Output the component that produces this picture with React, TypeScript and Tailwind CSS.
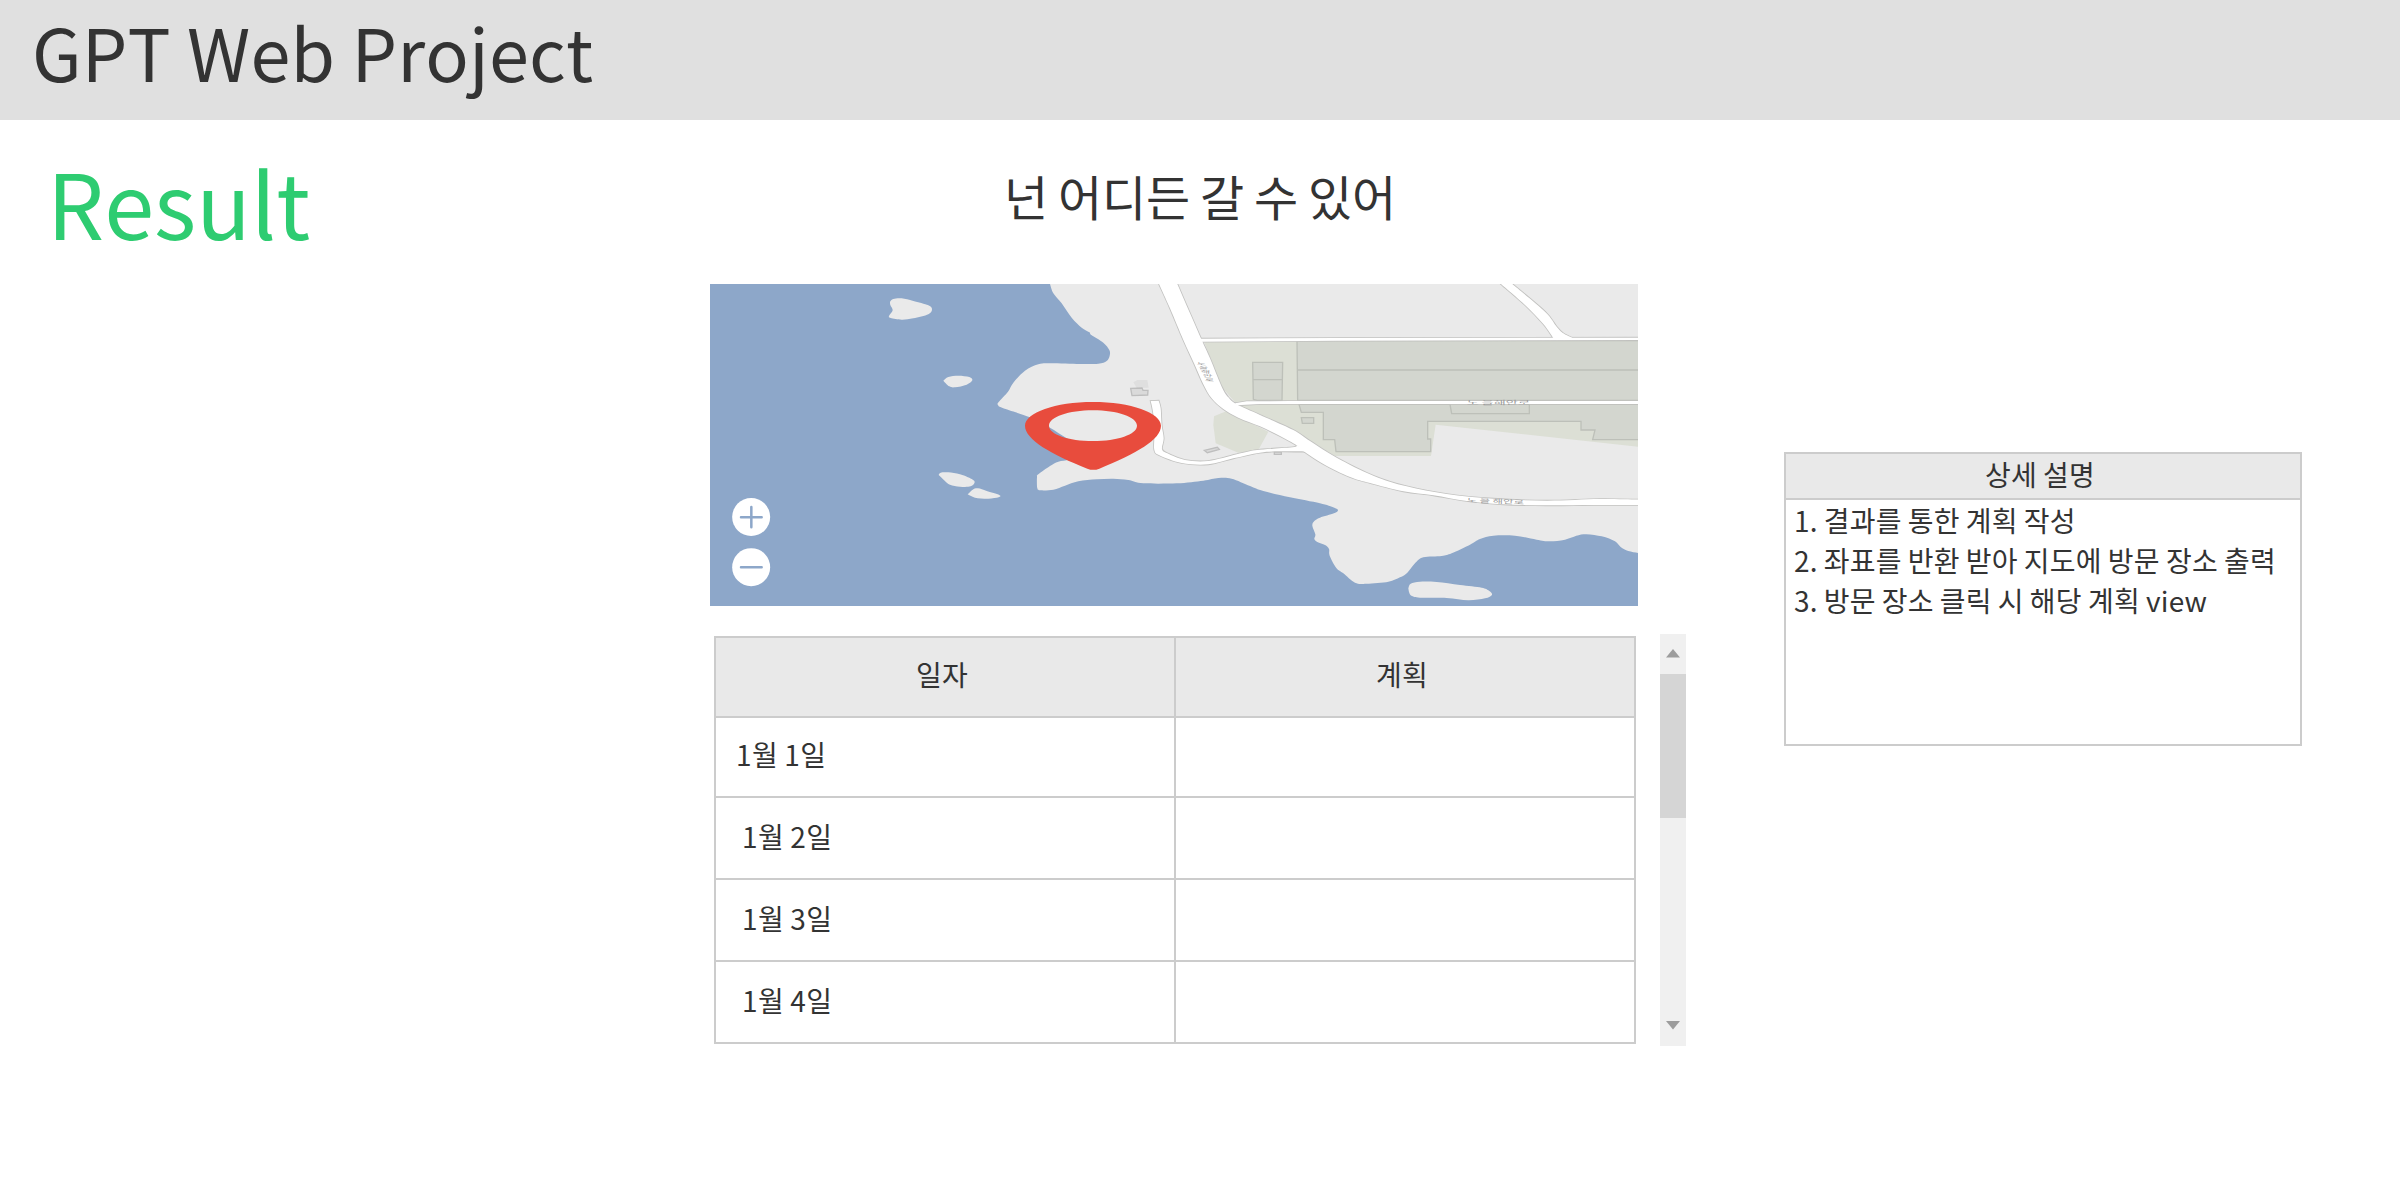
import React from "react";

type Point = [number, number];

/* Catmull-Rom segments through the given points, without a leading move. */
function curve(points: Point[]): string {
  let d = "";
  for (let i = 0; i < points.length - 1; i++) {
    const p0 = points[Math.max(i - 1, 0)];
    const p1 = points[i];
    const p2 = points[i + 1];
    const p3 = points[Math.min(i + 2, points.length - 1)];
    d += `C${p1[0] + (p2[0] - p0[0]) / 6} ${p1[1] + (p2[1] - p0[1]) / 6} ${p2[0] - (p3[0] - p1[0]) / 6} ${p2[1] - (p3[1] - p1[1]) / 6} ${p2[0]} ${p2[1]}`;
  }
  return d;
}

const open = (pts: Point[]) => `M${pts[0].join(" ")}${curve(pts)}`;
const closed = (pts: Point[]) => `${open([...pts, pts[0]])}Z`;
const band = (a: Point[], b: Point[]) => {
  const r = [...b].reverse();
  return `${open(a)}L${r[0].join(" ")}${curve(r)}Z`;
};

const coast: Point[] = [
  [240, 27], [250, 55], [275, 85], [305, 128], [335, 158], [358, 172], [364, 180], [400, 203], [418, 225], [419, 242],
  [410, 258], [385, 266], [330, 267], [240, 265], [205, 268], [165, 287], [130, 323], [114, 350], [86, 381], [84, 390],
  [98, 399], [180, 427], [240, 458], [290, 490], [350, 530], [300, 553], [265, 560], [240, 573], [205, 598], [201, 606],
  [202, 640], [212, 646], [250, 644], [285, 632], [325, 619], [380, 613], [430, 611], [475, 615], [520, 625],
  [620, 625], [700, 617], [745, 609], [785, 611], [840, 633], [880, 648], [960, 667], [1050, 685], [1093, 698],
  [1104, 706], [1092, 715], [1050, 728], [1033, 738], [1027, 752], [1036, 778], [1033, 792], [1042, 801], [1065, 810],
  [1077, 822], [1079, 842], [1099, 879], [1120, 895], [1155, 923], [1190, 926], [1255, 920], [1290, 907], [1312, 893],
  [1335, 865], [1360, 847], [1415, 843], [1445, 835], [1500, 809], [1530, 792], [1570, 782], [1635, 782], [1700, 794],
  [1740, 799], [1785, 794], [1840, 778], [1895, 784], [1935, 799], [1952, 816], [1975, 828], [2006, 834],
];

const islands: Point[][] = [
  [[570, 80], [580, 72], [605, 70], [640, 78], [685, 91], [696, 103], [685, 118], [640, 130], [605, 134], [572, 129], [567, 123], [578, 106], [571, 90]],
  [[730, 317], [745, 306], [775, 302], [808, 306], [817, 316], [800, 329], [765, 337], [748, 334]],
  [[716, 600], [722, 593], [745, 592], [780, 598], [815, 612], [824, 622], [812, 634], [780, 635], [750, 629], [734, 617]],
  [[803, 658], [818, 644], [834, 640], [860, 648], [898, 660], [896, 667], [865, 671], [825, 668]],
  [[2125, 940], [2132, 926], [2160, 920], [2210, 921], [2280, 930], [2345, 938], [2365, 946], [2376, 959], [2355, 970], [2305, 976], [2240, 969], [2160, 968], [2136, 963], [2128, 954]],
];

const mainLeft: Point[] = [
  [567, 27], [600, 100], [640, 195], [672, 265], [700, 328], [725, 370], [760, 402], [805, 428], [870, 454], [930, 483],
  [980, 511], [1000, 528], [1060, 567], [1140, 606], [1200, 624], [1300, 649], [1390, 661], [1490, 678], [1600, 688],
  [1730, 691], [1870, 690], [2010, 690],
];
const mainRight: Point[] = [
  [622, 27], [660, 115], [695, 195], [720, 250], [755, 335], [775, 367], [800, 388], [870, 420], [970, 465], [1020, 498],
  [1100, 548], [1210, 602], [1310, 634], [1430, 657], [1570, 671], [1730, 677], [1890, 672], [2010, 674],
];
const laneOuter: Point[] = [
  [542, 378], [548, 405], [554, 450], [553, 490], [553, 525], [568, 541], [635, 564], [715, 568], [790, 550], [870, 533],
  [930, 529], [1010, 530],
];
const laneInner: Point[] = [
  [566, 377], [572, 400], [575, 450], [581, 490], [576, 522], [592, 535], [645, 555], [715, 558], [800, 538], [855, 526],
  [910, 521], [973, 516], [980, 509],
];
const sideLeft: Point[] = [[1593, 27], [1665, 90], [1720, 147], [1750, 189]];
const sideRight: Point[] = [[1627, 27], [1725, 110], [1760, 155], [1780, 175], [1807, 189]];

const roads = [band(laneOuter, laneInner), band(sideLeft, sideRight), "M690 191L1100 189L2010 188V195L1100 197L690 200Z", "M795 385L830 379L960 378H2010V387H870L800 391Z"];
const mainRoad = band(mainLeft, mainRight);

function MapView() {
  return (
    <svg className="block h-[322px] w-[928px]" viewBox="30 27 2784 966" preserveAspectRatio="none">
      <rect x="30" y="27" width="2784" height="966" fill="#8da7c9" />
      <g fill="#eaeaea">
        {islands.map((pts, i) => (
          <path key={i} d={closed(pts)} />
        ))}
      </g>
      <g transform="translate(810 0)">
        <path d={`${open(coast)}L2006 27Z`} fill="#eaeaea" />
        <g fill="#dcdfd5">
          <path d="M700 196H2010V516L1397 449L1383 543H1095L1020 498L870 420L800 388L755 335Z" />
          <path d="M732 424L770 408L895 470L865 525L805 533L737 505L730 450Z" />
        </g>
        <g fill="#d3d6cf" stroke="#bdc0b9" strokeWidth="4">
          <path d="M981 197H2015V376H983ZM983 285H2010" />
          <path d="M848 262H938L936 376H862L850 373ZM848 314H938" />
          <path d="M987 388L994 412H1060V494H1094L1098 530H1382V492H1373V439H1833V465H1875L1868 494H2015V388Z" />
          <path d="M1440 388L1445 416H1678V388" />
          <path d="M994 428H1031V445H997Z" />
        </g>
        <path d="M490 322L502 315H532L536 338L500 339Z" fill="#dfdfdf" />
        <g fill="#dadada" stroke="#bebebe" strokeWidth="4">
          <path d="M482 340L516 339L519 346L534 346L533 360L486 362Z" />
          <path d="M703 526L742 517L748 523L712 533Z" />
          <path d="M913 531H934V538H913Z" />
        </g>
        <g fill="#c9c9c7" stroke="#c2c2c0" strokeWidth="5">
          {roads.map((d) => (
            <path key={d} d={d} />
          ))}
          <path d={mainRoad} />
        </g>
        <g fill="#fff">
          {roads.map((d) => (
            <path key={d} d={d} />
          ))}
          <path d={mainRoad} />
        </g>
        <g fill="#999" fontFamily="'Noto Sans CJK KR', sans-serif" fontSize="36">
          <text transform="translate(1490 387) scale(1 .42)" textLength="190" lengthAdjust="spacingAndGlyphs">노 을해안로</text>
          <text transform="translate(1490 682) rotate(2) scale(1 .48)" textLength="172" lengthAdjust="spacingAndGlyphs">노 을 해안로</text>
          {["노", "을", "해", "안", "로"].map((c, i) => (
            <text key={c} transform={`translate(${680 + i * 6} ${270 + i * 12}) rotate(3) scale(.85 .32)`}>
              {c}
            </text>
          ))}
        </g>
        <path
          fill="#e84c3d"
          fillRule="evenodd"
          d="M369 381C482 381 573 413 573 452C573 494 500 534 388 581Q370 588 352 581C245 538 165 494 165 452C165 413 256 381 369 381ZM369 406C296 406 237 426 237 452C237 478 296 498 369 498C442 498 501 478 501 452C501 426 442 406 369 406Z"
        />
      </g>
      <circle cx="153.500" cy="726" r="57" fill="#fff" />
      <circle cx="153.500" cy="876.500" r="57" fill="#fff" />
      <path d="M123 726.500H185M154 696V757M123 877H185" stroke="#8da7c9" strokeWidth="7.500" strokeLinecap="round" />
    </svg>
  );
}

const rows = [
  { date: "1월 1일", cell: "h-20 pb-1.5 pl-[20px]" },
  { date: "1월 2일", cell: "h-[82px] pb-1 pl-[26px]" },
  { date: "1월 3일", cell: "h-[82px] pb-1 pl-[26px]" },
  { date: "1월 4일", cell: "h-[82px] pb-1 pl-[26px]" },
];

function PlanTable() {
  return (
    <div className="mt-0.5 w-[922px] border-2 border-b-0 border-[#ccc]">
      <div className="grid h-20 grid-cols-2 border-b-2 border-[#ccc] bg-[#e9e9e9] text-center leading-[72px]">
        <div className="border-r border-[#ccc] pr-1.5">일자</div>
        <div className="border-l border-[#ccc] pr-1.5">계획</div>
      </div>
      {rows.map((r) => (
        <div key={r.date} className="grid grid-cols-2">
          <div className={`flex items-center border-r border-b-2 border-[#ccc] tracking-[0.4px] ${r.cell}`}>{r.date}</div>
          <div className="border-b-2 border-l border-[#ccc]" />
        </div>
      ))}
    </div>
  );
}

function Scrollbar() {
  return (
    <div className="flex h-[412px] w-[26px] flex-col bg-[#f0f0f0]">
      <div className="flex h-10 justify-center pt-[15px]">
        <svg className="h-[9px] w-[14px]" viewBox="0 0 14 9" fill="#9c9c9c"><path d="M7 0L14 8.500H0Z" /></svg>
      </div>
      <div className="h-36 bg-[#d5d5d5]" />
      <div className="mt-auto flex h-[25px] justify-center">
        <svg className="h-[9px] w-[14px]" viewBox="0 0 14 9" fill="#9c9c9c"><path d="M0 0H14L7 8.500Z" /></svg>
      </div>
    </div>
  );
}

export default function App() {
  return (
    <div className="h-[1200px] w-[2400px] overflow-hidden bg-white font-['Noto_Sans_CJK_KR',sans-serif] text-[28px] tracking-[0.24px] text-[#333] [font-kerning:none] [word-spacing:-0.5px]">
      <header className="h-[120px] bg-[#e0e0e0] pl-8 text-[72px] leading-[102px] tracking-[0.16px] [word-spacing:0px]">GPT Web Project</header>
      <main className="flex">
        <h1 className="w-[710px] pt-4 pl-[47px] text-[90px] leading-[130px] tracking-normal text-[#2ecc71]">Result</h1>
        <section className="w-[976px]">
          <h2 className="h-[164px] pt-10 pl-1 text-center text-5xl leading-[70px] tracking-[-0.16px] [word-spacing:-0.6px]">넌 어디든 갈 수 있어</h2>
          <MapView />
          <div className="mt-7 flex items-start justify-between pl-1">
            <PlanTable />
            <Scrollbar />
          </div>
        </section>
        <aside className="mt-[332px] ml-[98px] h-[294px] w-[518px] border-2 border-[#ccc]">
          <h3 className="h-[46px] border-b-2 border-[#ccc] bg-[#e9e9e9] pr-1.5 text-center leading-10">상세 설명</h3>
          <ol className="pl-2 leading-10">
            <li>1. 결과를 통한 계획 작성</li>
            <li>2. 좌표를 반환 받아 지도에 방문 장소 출력</li>
            <li>3. 방문 장소 클릭 시 해당 계획 view</li>
          </ol>
        </aside>
      </main>
    </div>
  );
}
